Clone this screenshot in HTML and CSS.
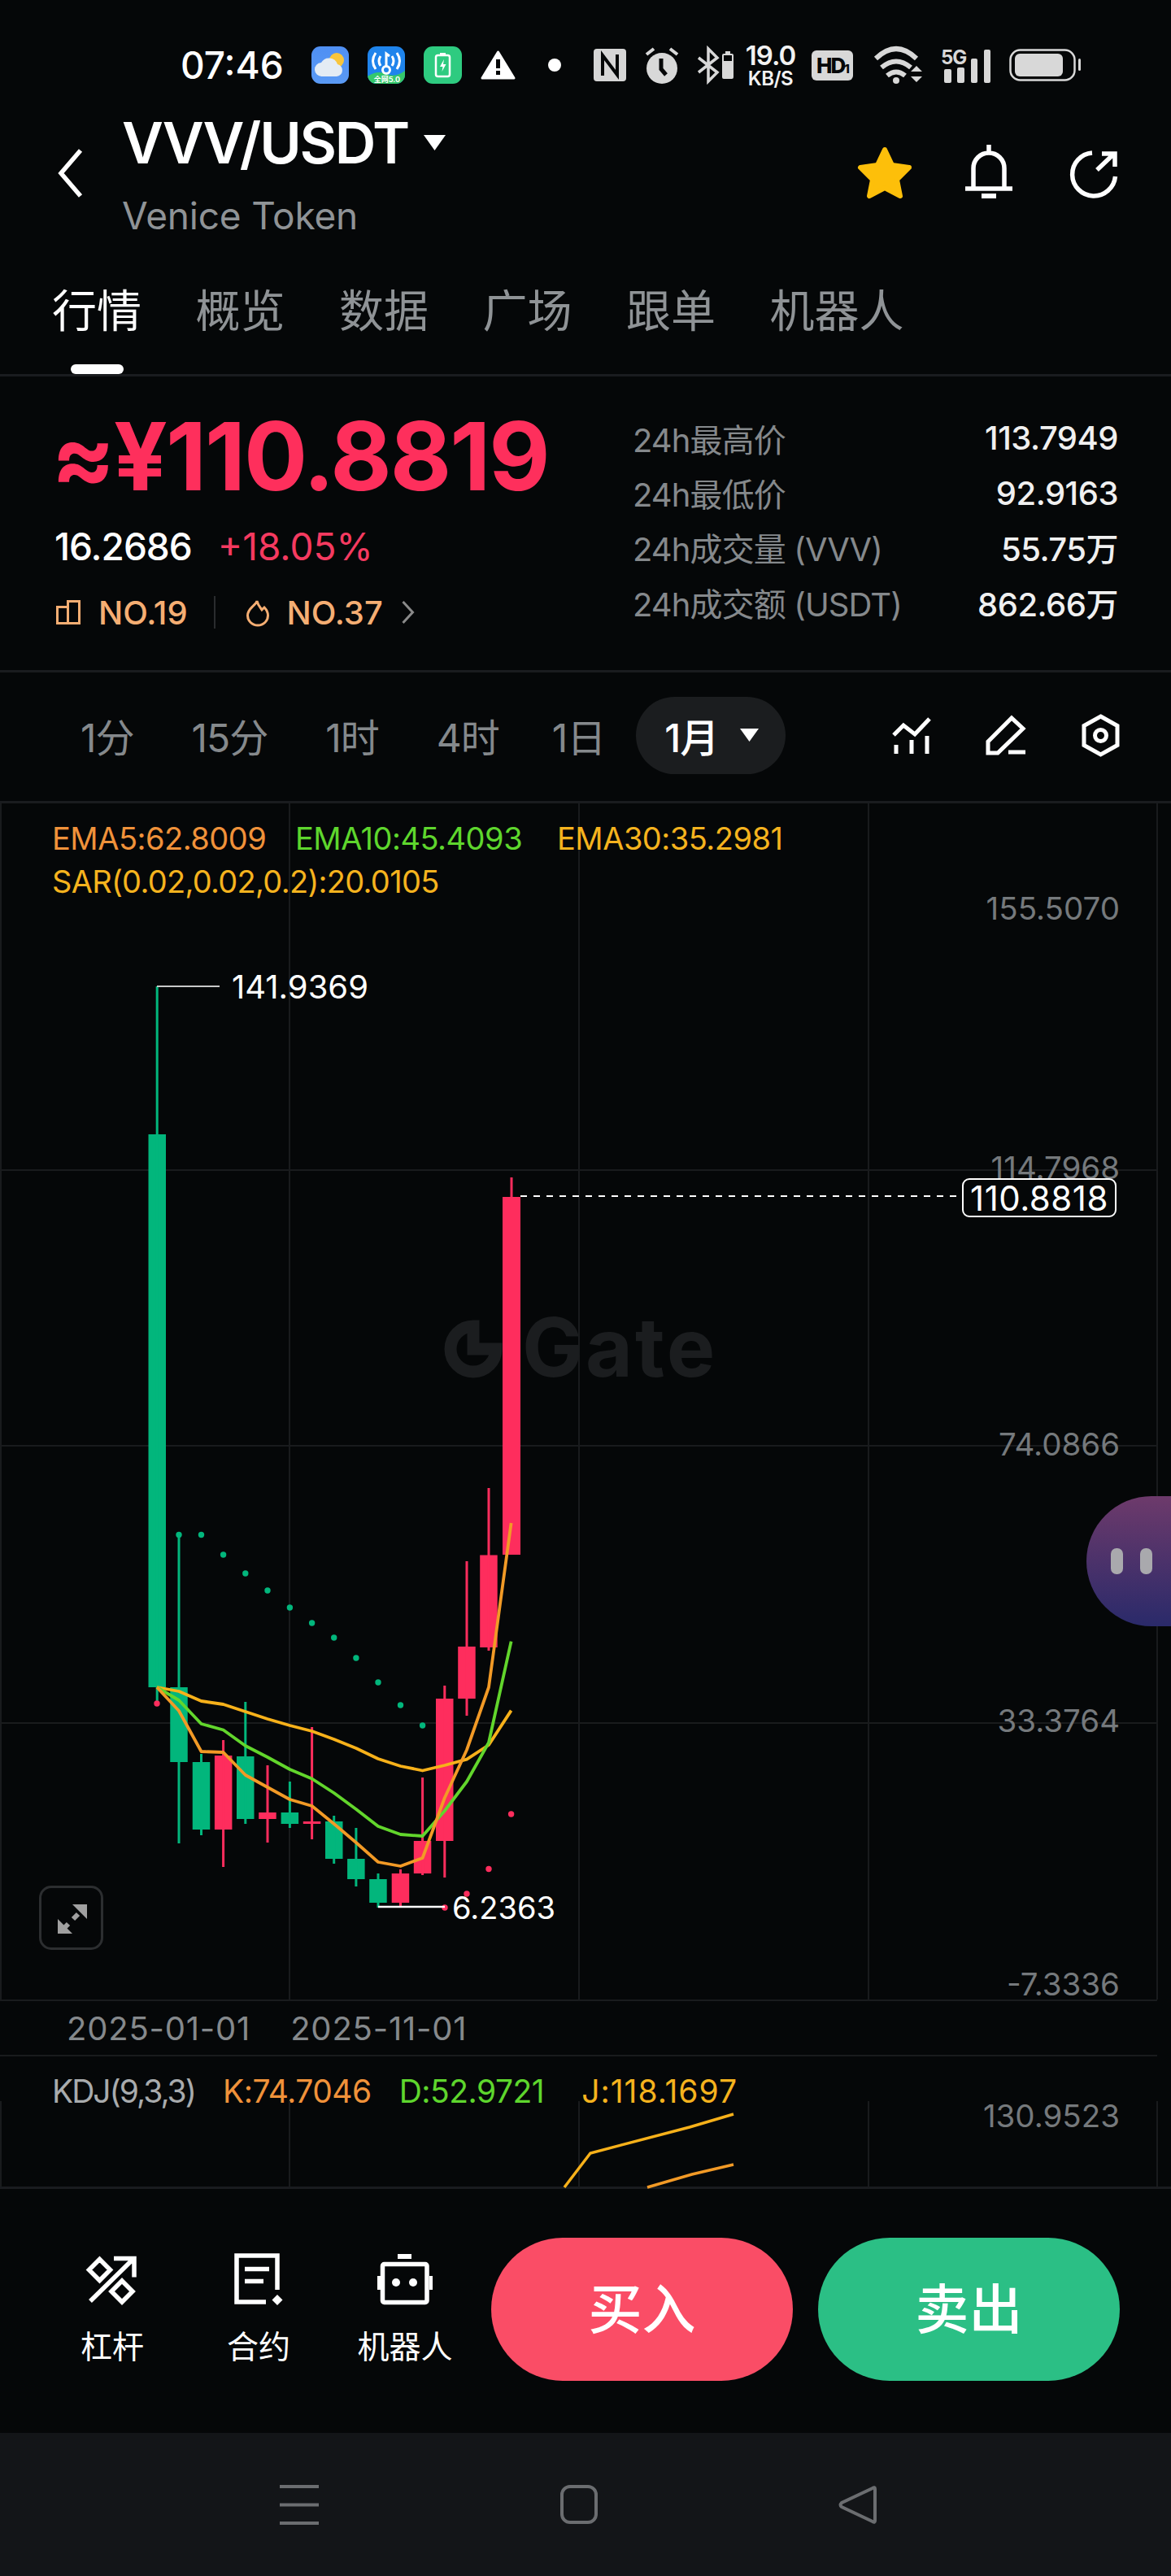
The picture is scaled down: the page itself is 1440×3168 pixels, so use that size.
FILE: index.html
```html
<!DOCTYPE html>
<html lang="zh-CN">
<head>
  <meta charset="UTF-8" />
  <meta name="viewport" content="width=device-width, initial-scale=1.0"/>
  <title>VVV/USDT</title>
  <link rel="stylesheet" href="styles.css">
</head>

<body>
  <!-- phone status bar -->
  <div class="status">
    <span class="clock">07:46</span>
    <svg class="app-first" width="46" height="46" viewBox="0 0 46 46">
      <defs><linearGradient id="sky" x1="0" y1="0" x2="0" y2="1"><stop offset="0" stop-color="#4f8ff3"/><stop offset="1" stop-color="#5a9af5"/></linearGradient></defs>
      <rect width="46" height="46" rx="11" fill="url(#sky)"/>
      <circle cx="31" cy="17" r="9" fill="#f8c53c"/>
      <path d="M13 37a8.500 8.500 0 0 1-1-17 11 11 0 0 1 20 2 7.600 7.600 0 0 1-1 15z" fill="#e4ecf4"/>
    </svg>
    <svg width="46" height="46" viewBox="0 0 46 46">
      <rect width="46" height="46" rx="11" fill="#1f84ec"/>
      <path d="M0 37q12-8 23-3t23-4v5a11 11 0 0 1-11 11H11A11 11 0 0 1 0 35z" fill="#35c86c"/>
      <path d="M10 8q-7 10 0 20M16 12q-4 6 0 12M36 8q7 10 0 20M30 12q4 6 0 12" class="wifi-arcs"/>
      <circle cx="23" cy="29" r="4.500" class="wifi-arcs"/>
      <path d="M23 24V9l4 3" class="wifi-arcs"/>
      <text x="24" y="44" class="wifi-tag">全网5.0</text>
    </svg>
    <svg width="47" height="46" viewBox="0 0 47 46">
      <rect width="47" height="46" rx="11" fill="#2ecb80"/>
      <rect x="15" y="11" width="17" height="26" rx="2.500" class="batt-line"/>
      <rect x="20" y="8" width="7" height="3" fill="#fff"/>
      <path d="M25 16l-5 9h3.500l-1 6 5-9h-3.500z" fill="#fff"/>
    </svg>
    <svg width="43" height="36" viewBox="0 0 43 36">
      <path d="M21.500 2L41 34H2z" fill="#fff" stroke="#fff" stroke-width="3" stroke-linejoin="round"/>
      <rect x="19" y="11" width="5" height="11" fill="#050708"/>
      <rect x="19" y="25" width="5" height="5" fill="#050708"/>
    </svg>
    <span class="dot"></span>
    <svg class="nfc" width="40" height="40" viewBox="0 0 40 40">
      <rect width="40" height="40" rx="4" fill="#d6d6d6"/>
      <path d="M11 33V8l18 24V7" class="nfc-line"/>
    </svg>
    <svg width="42" height="45" viewBox="0 0 42 45">
      <circle cx="21" cy="26" r="19" fill="#d8d8d8"/>
      <path d="M20 14v13l6 7" class="alarm-hand"/>
      <path d="M2 9l9-7M40 9l-9-7" class="alarm-ear"/>
    </svg>
    <svg class="bt" width="26" height="44" viewBox="0 0 26 44">
      <path d="M1 13l23 18-11 11V2l11 11L1 31" class="bt-line"/>
    </svg>
    <svg class="bt-batt" width="14" height="34" viewBox="0 0 14 34">
      <path d="M4 0h6v3h2a2 2 0 0 1 2 2v27a2 2 0 0 1-2 2H2a2 2 0 0 1-2-2V5a2 2 0 0 1 2-2h2z" fill="#d8d8d8"/>
      <rect x="2" y="5" width="10" height="7" fill="#050708"/>
    </svg>
    <div class="speed">
      <span class="speed-num">19.0</span>
      <span class="speed-unit">KB/S</span>
    </div>
    <span class="hd">HD<small>1</small></span>
    <svg class="wifi" width="59" height="45" viewBox="0 0 59 45">
      <path d="M2 14q25-24 50 0M9 25q18-15 36 0M16 35q11-9 22 0" class="wifi-line"/>
      <circle cx="27" cy="41" r="4" fill="#d8d8d8"/>
      <path d="M45 30h14l-7-7zM45 36h14l-7 7z" fill="#d8d8d8"/>
    </svg>
    <svg width="61" height="44" viewBox="0 0 61 44">
      <text x="0" y="21" class="five-g">5G</text>
      <rect x="4" y="27" width="9" height="17" rx="2" fill="#d8d8d8"/>
      <rect x="20" y="25" width="9" height="19" rx="2" fill="#d8d8d8"/>
      <rect x="37" y="14" width="8" height="30" rx="2" fill="#d8d8d8"/>
      <rect x="53" y="3" width="8" height="41" rx="2" fill="#d8d8d8"/>
    </svg>
    <svg width="88" height="40" viewBox="0 0 88 40">
      <rect x="1.500" y="1.500" width="79" height="37" rx="12" class="batt-frame"/>
      <rect x="7" y="6" width="59" height="28" rx="6" fill="#d8d8d8"/>
      <rect x="85" y="12" width="3" height="15" rx="1.500" fill="#d8d8d8"/>
    </svg>
  </div>

  <!-- pair name and actions -->
  <div class="head">
    <svg class="back" width="33" height="60" viewBox="0 0 33 60"><path d="M29 2L5 30l24 28" class="icon-line"/></svg>
    <div class="pair">
      <div class="pair-name">VVV/USDT<svg class="pair-caret" width="27" height="19" viewBox="0 0 27 19"><path d="M0 0h27L13.500 19z" fill="#fff"/></svg></div>
      <div class="pair-sub">Venice Token</div>
    </div>
    <div class="actions">
      <svg width="68" height="64" viewBox="0 0 68 64"><path d="M34 4l9 19 21 3-15 15 4 20-19-10-19 10 4-20L4 26l21-3z" class="star"/></svg>
      <svg class="bell" width="58" height="67" viewBox="0 0 58 67">
        <path d="M10 54V29a19 19 0 0 1 38 0v25M0 54h58M29 0v10" class="icon-line"/>
        <rect x="20" y="60" width="18" height="6" fill="#fff"/>
      </svg>
      <svg class="share" width="59" height="58" viewBox="0 0 59 58">
        <path d="M28 3a26.500 26.500 0 1 0 28.500 29" class="icon-line"/>
        <path d="M34 24L54 5M40 4h16v16" class="icon-line"/>
      </svg>
    </div>
  </div>

  <div class="tabs">
    <span class="tab active">行情</span>
    <span class="tab">概览</span>
    <span class="tab">数据</span>
    <span class="tab">广场</span>
    <span class="tab">跟单</span>
    <span class="tab">机器人</span>
  </div>

  <!-- price block -->
  <div class="ticker">
    <div class="ticker-left">
      <div class="price">≈¥110.8819</div>
      <div class="change">
        <span class="change-usd">16.2686</span>
        <span class="change-pct">+18.05%</span>
      </div>
      <div class="ranks">
        <svg width="30" height="30" viewBox="0 0 30 30"><path d="M1.500 28.500v-20h13v20zM14.500 28.500v-27h14v27z" class="rank-line"/></svg>
        <span class="rank-text">NO.19</span>
        <span class="rank-sep"></span>
        <svg width="28" height="33" viewBox="0 0 28 33"><path d="M13 2c1 5 4 8 6 11l3-3c3 3 4.500 6 4.500 10a12.500 12 0 0 1-25 0c0-6 4-9 7-12 2-2 4-3 4.500-6z" class="rank-line"/></svg>
        <span class="rank-text">NO.37</span>
        <svg class="rank-more" width="15" height="28" viewBox="0 0 15 28"><path d="M1.500 1l12 13-12 13" class="more-line"/></svg>
      </div>
    </div>
    <div class="stats">
      <div class="stat"><span>24h最高价</span><b>113.7949</b></div>
      <div class="stat"><span>24h最低价</span><b>92.9163</b></div>
      <div class="stat"><span>24h成交量 (VVV)</span><b>55.75万</b></div>
      <div class="stat"><span>24h成交额 (USDT)</span><b>862.66万</b></div>
    </div>
  </div>

  <!-- time frames -->
  <div class="frames">
    <span class="frame">1分</span>
    <span class="frame">15分</span>
    <span class="frame">1时</span>
    <span class="frame frame-four">4时</span>
    <span class="frame">1日</span>
    <span class="frame-on">1月<svg width="23" height="16" viewBox="0 0 23 16"><path d="M0 0h23L11.500 16z" fill="#fff"/></svg></span>
    <div class="frame-tools">
      <svg width="46" height="45" viewBox="0 0 46 45">
        <path d="M1 22L13 10l14 11L45 2M4 34v11M23 28v17M42 23v22" class="tool-line"/>
      </svg>
      <svg width="48" height="48" viewBox="0 0 48 48">
        <path d="M2 32L31 3l14 13-31 30H2zM27 45h21" class="tool-line"/>
      </svg>
      <svg width="47" height="53" viewBox="0 0 47 53">
        <path d="M23.500 3L44 14.500v24L23.500 50 3 38.500v-24z" class="tool-line"/>
        <circle cx="23.500" cy="26.500" r="7" class="tool-line"/>
      </svg>
    </div>
  </div>

  <!-- main candle chart, svg coordinates are page coordinates -->
  <div class="chart">
    <svg class="chart-svg" width="1440" height="1471" viewBox="0 988 1440 1471">
      <g class="grid">
        <path d="M1 988V2459M356 988V2459M712 988V2459M1068 988V2459M1423 988V2459"/>
        <path d="M0 1439H1423M0 1778H1423M0 2119H1423"/>
      </g>

      <g class="mark">
        <path d="M582 1631a28 28 0 1 0 28 28h-28z" class="mark-ring"/>
        <text x="642" y="1693" class="mark-text">Gate</text>
      </g>

      <text x="64" y="1031" class="legend ema5">EMA5:62.8009</text>
      <text x="363" y="1031" class="legend ema10">EMA10:45.4093</text>
      <text x="685" y="1031" class="legend ema30">EMA30:35.2981</text>
      <text x="64" y="1084" class="legend sar">SAR(0.02,0.02,0.2):20.0105</text>

      <g class="axis">
        <text x="1377" y="1117">155.5070</text>
        <text x="1377" y="1436">114.7968</text>
        <text x="1377" y="1776">74.0866</text>
        <text x="1377" y="2116">33.3764</text>
        <text x="1377" y="2440">-7.3336</text>
      </g>

      <g class="up">
        <rect x="182.500" y="1395" width="21.500" height="680"/><rect x="191.700" y="1213" width="3" height="880"/>
        <rect x="209.250" y="2075" width="21.500" height="92"/><rect x="218.500" y="1887" width="3" height="380"/>
        <rect x="236.750" y="2167" width="21.500" height="83"/><rect x="246" y="2157" width="3" height="100"/>
        <rect x="291" y="2160" width="21.500" height="77"/><rect x="300.300" y="2093" width="3" height="150"/>
        <rect x="345.600" y="2229" width="21.500" height="14"/><rect x="354.900" y="2191" width="3" height="57"/>
        <rect x="400" y="2240" width="21.500" height="46"/><rect x="409.200" y="2233" width="3" height="59"/>
        <rect x="427.100" y="2286" width="21.500" height="25"/><rect x="436.400" y="2248" width="3" height="72"/>
        <rect x="454.200" y="2311" width="21.500" height="29"/><rect x="463.500" y="2304" width="3" height="42"/>
      </g>
      <g class="down">
        <rect x="263.900" y="2159" width="21.500" height="91"/><rect x="273.100" y="2140" width="3" height="156"/>
        <rect x="318.200" y="2229" width="21.500" height="8"/><rect x="327.500" y="2171" width="3" height="95"/>
        <rect x="372.800" y="2240" width="21.500" height="3"/><rect x="382.100" y="2124" width="3" height="138"/>
        <rect x="481.700" y="2304" width="21.500" height="36"/><rect x="491" y="2299" width="3" height="46"/>
        <rect x="508.800" y="2264" width="21.500" height="40"/><rect x="518.100" y="2186" width="3" height="120"/>
        <rect x="536" y="2089" width="21.500" height="175"/><rect x="545.300" y="2073" width="3" height="236"/>
        <rect x="563.200" y="2025" width="21.500" height="64"/><rect x="572.500" y="1920" width="3" height="190"/>
        <rect x="590.200" y="1912.500" width="21.500" height="113.500"/><rect x="599.500" y="1830" width="3" height="200"/>
        <rect x="618" y="1472" width="22" height="440"/><rect x="627.500" y="1448" width="3" height="24"/>
      </g>

      <g class="sar-up">
        <circle cx="220" cy="1887.500" r="3.700"/><circle cx="247.500" cy="1887.500" r="3.700"/>
        <circle cx="274.600" cy="1912" r="3.700"/><circle cx="301.800" cy="1935" r="3.700"/>
        <circle cx="329" cy="1956" r="3.700"/><circle cx="356.400" cy="1977" r="3.700"/>
        <circle cx="383.600" cy="1996" r="3.700"/><circle cx="410.700" cy="2014" r="3.700"/>
        <circle cx="437.900" cy="2039" r="3.700"/><circle cx="465" cy="2069" r="3.700"/>
        <circle cx="492.500" cy="2097" r="3.700"/><circle cx="519.600" cy="2122" r="3.700"/>
      </g>
      <g class="sar-down">
        <circle cx="193" cy="2095" r="3.700"/><circle cx="547" cy="2346" r="3.700"/>
        <circle cx="574" cy="2329" r="3.700"/><circle cx="601" cy="2298.500" r="3.700"/>
        <circle cx="628.600" cy="2231" r="3.700"/>
      </g>

      <polyline class="line line-30" points="193,2075 220,2080 247.500,2092 274.600,2096 301.800,2105 329,2114 356.400,2122 383.600,2129 410.700,2139 437.900,2150 465,2163 492.500,2172 519.600,2177.500 546.800,2171 574,2163.600 601,2146 628.600,2103.600"/>
      <polyline class="line line-10" points="193,2075 220,2091 247.500,2120 274.600,2127.500 301.800,2147 329,2161 356.400,2176 383.600,2187.500 410.700,2205 437.900,2225 465,2246 492.500,2256 519.600,2258 546.800,2227 574,2191 601,2143 628.600,2018.600"/>
      <polyline class="line line-5" points="193,2075 220,2104 247.500,2154 274.600,2155 301.800,2183 329,2198 356.400,2213 383.600,2221 410.700,2243 437.900,2266 465,2290 492.500,2295 519.600,2285 546.800,2211 574,2152 601,2075 628.600,1873"/>

      <path d="M193 1213H270" class="pin-high"/>
      <text x="285" y="1213" class="pin-text">141.9369</text>
      <path d="M465 2345H547" class="pin-low"/>
      <text x="556" y="2346" class="pin-low-text">6.2363</text>

      <path d="M640 1471H1183" class="last-dash"/>
      <rect x="1184" y="1450" width="188" height="46" rx="8" class="last-box"/>
      <text x="1278" y="1473" class="last-text">110.8818</text>
    </svg>

    <div class="expand">
      <svg width="73" height="73" viewBox="0 0 73 73">
        <path d="M38 20h18v18zM20 38v18h18z" fill="#a0a0a0"/>
        <path d="M45 32l-6 6M33 44l-6 6" class="expand-line"/>
      </svg>
    </div>
    <div class="float-btn"><i></i><i></i></div>
  </div>

  <div class="dates">
    <span>2025-01-01</span>
    <span>2025-11-01</span>
  </div>

  <!-- KDJ panel, cut off by the bottom bar -->
  <div class="kdj">
    <div class="kdj-legend">
      <span class="kdj-name">KDJ(9,3,3)</span>
      <span class="ema5">K:74.7046</span>
      <span class="ema10">D:52.9721</span>
      <span class="ema30">J:118.1697</span>
    </div>
    <svg class="kdj-svg" width="1440" height="105" viewBox="0 2584 1440 105">
      <g class="grid"><path d="M1 2584V2689M356 2584V2689M712 2584V2689M1068 2584V2689M1423 2584V2689"/></g>
      <polyline class="kdj-line line-30" points="694,2690 726,2648 848,2616 902,2600"/>
      <polyline class="kdj-line line-5" points="796,2690 851,2674 902,2662"/>
      <text x="1377" y="2602" class="kdj-axis">130.9523</text>
    </svg>
  </div>

  <!-- bottom trade bar -->
  <div class="trade">
    <div class="trade-tools">
      <div class="trade-tool">
        <div class="trade-icon">
          <svg width="60" height="60" viewBox="0 0 60 60">
            <path d="M14.500 5.500l13 13-13 13-13-13zM42 32l13 13-13 13-13-13zM3 57L56 5M32 4.500h25v23" class="trade-line"/>
          </svg>
        </div>
        <span>杠杆</span>
      </div>
      <div class="trade-tool">
        <div class="trade-icon">
          <svg width="60" height="65" viewBox="0 0 60 65">
            <path d="M39 60H3V3h50v42M13 19.500h30M13 34.500h23" class="trade-line"/>
            <path d="M53 51l6.500 6.500L53 64l-6.500-6.500z" fill="#fff"/>
          </svg>
        </div>
        <span>合约</span>
      </div>
      <div class="trade-tool">
        <div class="trade-icon">
          <svg width="68" height="62" viewBox="0 0 68 62">
            <rect x="25" y="0" width="17" height="6" fill="#fff"/>
            <rect x="6.500" y="12.500" width="54.500" height="47" rx="2" class="trade-line"/>
            <rect x="0" y="27" width="4" height="17" fill="#fff"/>
            <rect x="64" y="27" width="4" height="17" fill="#fff"/>
            <circle cx="23" cy="35" r="5" fill="#fff"/>
            <circle cx="44" cy="35" r="5" fill="#fff"/>
          </svg>
        </div>
        <span>机器人</span>
      </div>
    </div>
    <div class="trade-btn buy">买入</div>
    <div class="trade-btn sell">卖出</div>
  </div>

  <div class="nav">
    <svg width="48" height="49" viewBox="0 0 48 49"><path d="M0 2h48M0 24.500h48M0 47h48" class="nav-line"/></svg>
    <svg width="46" height="48" viewBox="0 0 46 48"><rect x="2" y="2" width="42" height="44" rx="10" class="nav-line"/></svg>
    <svg width="46" height="47" viewBox="0 0 46 47"><path d="M44 4v39q0 3-3 1L3 26q-3-2 0-5L41 3q3-2 3 1z" class="nav-line"/></svg>
  </div>
</body>
</html>
```

FILE: styles.css
```css
* {
  box-sizing: border-box;
}
body {
  margin: 0;
  width: 1440px;
  height: 3168px;
  overflow: hidden;
  background-color: #050708;
  color: #fff;
  font-family: Inter, "Noto Sans CJK SC", sans-serif;
}
svg {
  display: block;
  flex: none;
  overflow: visible;
}

/* status bar */
.status {
  display: flex;
  align-items: center;
  gap: 23px;
  height: 130px;
  padding: 30px 0 0 222px;
}
.clock {
  width: 128px;
  font-size: 46px;
  font-weight: 500;
  line-height: 1;
  white-space: nowrap;
}
.app-first {
  margin-left: 10px;
}
.dot {
  width: 16px;
  height: 16px;
  margin: 0 17px;
  border-radius: 50%;
  background-color: #fff;
}
.bt-batt {
  margin-left: -19px;
}
.speed {
  display: flex;
  flex-direction: column;
  align-items: center;
  width: 61px;
  margin: 0 -3px 0 -8px;
  line-height: 1;
  color: #f2f2f2;
}
.speed-num {
  font-size: 33px;
  font-weight: 600;
  letter-spacing: -1px;
}
.speed-unit {
  font-size: 24px;
  font-weight: 600;
  letter-spacing: -0.500px;
}
.hd {
  width: 51px;
  height: 37px;
  border-radius: 6px;
  background-color: #d8d8d8;
  color: #050708;
  font-size: 26px;
  font-weight: 800;
  line-height: 37px;
  text-align: center;
  letter-spacing: -2px;
}
.hd small {
  font-size: 15px;
}
.wifi {
  margin-left: 3px;
}
.wifi-arcs {
  fill: none;
  stroke: #fff;
  stroke-width: 3;
}
.wifi-tag {
  font-size: 9px;
  font-weight: 700;
  fill: #fff;
  text-anchor: middle;
}
.batt-line {
  fill: none;
  stroke: #fff;
  stroke-width: 2.500;
}
.nfc-line {
  fill: none;
  stroke: #050708;
  stroke-width: 4;
}
.alarm-hand {
  fill: none;
  stroke: #050708;
  stroke-width: 5;
}
.alarm-ear {
  fill: none;
  stroke: #d8d8d8;
  stroke-width: 4;
}
.bt-line {
  fill: none;
  stroke: #d8d8d8;
  stroke-width: 3.500;
}
.wifi-line {
  fill: none;
  stroke: #d8d8d8;
  stroke-width: 6;
}
.five-g {
  font-size: 24px;
  font-weight: 700;
  fill: #d8d8d8;
  letter-spacing: -1px;
}
.batt-frame {
  fill: none;
  stroke: #d8d8d8;
  stroke-width: 2.500;
}

/* pair header */
.head {
  display: flex;
  align-items: flex-start;
  height: 190px;
  padding: 0 66px 0 70px;
}
.back {
  margin: 53px 47px 0 0;
}
.icon-line {
  fill: none;
  stroke: #fff;
  stroke-width: 5.500;
}
.pair {
  margin-top: 8px;
}
.pair-name {
  display: flex;
  align-items: center;
  font-size: 70px;
  font-weight: 600;
  line-height: 76px;
  letter-spacing: -2.200px;
}
.pair-caret {
  margin: -2px 0 0 19px;
}
.pair-sub {
  margin-top: 24px;
  font-size: 46px;
  line-height: 54px;
  letter-spacing: -0.200px;
  color: #8f9396;
}
.actions {
  display: flex;
  align-items: center;
  height: 67px;
  margin: 48px 0 0 auto;
}
.star {
  fill: #fdbf0a;
  stroke: #fdbf0a;
  stroke-width: 6;
  stroke-linejoin: round;
}
.bell {
  margin: 0 70px 0 65px;
}
.share {
  margin-top: 5px;
}

/* tabs */
.tabs {
  display: flex;
  gap: 66.500px;
  height: 143px;
  padding-left: 64px;
  border-bottom: 3px solid #1a1c1f;
}
.tab {
  position: relative;
  height: 140px;
  padding-top: 29px;
  font-size: 55px;
  line-height: 66px;
  color: #8f9396;
}
.tab.active {
  color: #fff;
}
.tab.active::after {
  content: "";
  position: absolute;
  left: 23px;
  bottom: 0;
  width: 65px;
  height: 12px;
  border-radius: 6px;
  background-color: #fff;
}

/* ticker */
.ticker {
  display: flex;
  height: 364px;
  border-bottom: 3px solid #1a1c1f;
}
.ticker-left {
  width: 778px;
  padding: 38px 0 0 69px;
}
.price {
  margin-left: -6px;
  font-size: 116px;
  font-weight: 700;
  line-height: 120px;
  letter-spacing: -2px;
  color: #fe2f5c;
  white-space: nowrap;
}
.change {
  display: flex;
  gap: 32px;
  margin: 26px 0 0 -2px;
  font-size: 46px;
  font-weight: 500;
  line-height: 50px;
}
.change-usd {
  letter-spacing: -1px;
}
.change-pct {
  color: #f53a60;
  font-weight: 400;
}
.ranks {
  display: flex;
  align-items: center;
  height: 44px;
  margin-top: 34px;
  color: #f5ae73;
  font-size: 40px;
  font-weight: 500;
}
.rank-text {
  margin-left: 22px;
}
.rank-line {
  fill: none;
  stroke: #f5ae73;
  stroke-width: 3;
}
.rank-sep {
  width: 2px;
  height: 40px;
  margin: 0 38px 0 32px;
  background-color: #2a2c2e;
}
.rank-more {
  margin-left: 23px;
}
.more-line {
  fill: none;
  stroke: #8a8a8a;
  stroke-width: 3;
}
.stats {
  flex: 1;
  padding: 42px 65px 0 0;
}
.stat {
  display: flex;
  justify-content: space-between;
  align-items: center;
  height: 67.400px;
  font-size: 40px;
  color: #85898c;
}
.stat span {
  letter-spacing: -0.900px;
}
.stat b {
  color: #f0f0f0;
  font-weight: 500;
  letter-spacing: -0.500px;
}

/* time frames */
.frames {
  display: flex;
  align-items: center;
  gap: 71px;
  height: 161px;
  padding: 0 63px 4px 99px;
  border-bottom: 3px solid #1a1c1f;
}
.frame {
  font-size: 48px;
  letter-spacing: -1px;
  color: #85898c;
  white-space: nowrap;
}
.frame-four {
  margin-right: -6px;
}
.frame-on {
  display: flex;
  align-items: center;
  gap: 27px;
  height: 95px;
  margin-left: -33px;
  padding: 0 33px 0 35px;
  border-radius: 48px;
  background-color: #1b1d1f;
  font-size: 48px;
  font-weight: 500;
  letter-spacing: -1px;
}
.frame-tools {
  display: flex;
  align-items: center;
  gap: 69px;
  margin-left: auto;
}
.tool-line {
  fill: none;
  stroke: #fff;
  stroke-width: 5;
}

/* chart */
.chart {
  position: relative;
  height: 1471px;
}
.grid path {
  fill: none;
  stroke: #191b1d;
  stroke-width: 2;
}
.mark-ring {
  fill: none;
  stroke: #1b1d1f;
  stroke-width: 15;
}
.mark-text {
  font-size: 100px;
  font-weight: 700;
  letter-spacing: 3px;
  fill: #1b1d1f;
}
.legend {
  font-size: 38px;
  dominant-baseline: central;
  letter-spacing: -0.500px;
}
text.ema5 {
  fill: #f0923a;
}
text.ema10 {
  fill: #5ed62d;
}
text.ema30,
text.sar {
  fill: #f5b31e;
}
text.sar {
  letter-spacing: -0.700px;
}
.axis text {
  font-size: 38.500px;
  fill: #75797c;
  text-anchor: end;
  dominant-baseline: central;
}
.up rect {
  fill: #02b67c;
}
.down rect {
  fill: #fe2d5d;
}
.sar-up circle {
  fill: #02b67c;
}
.sar-down circle {
  fill: #fe2d5d;
}
.line {
  fill: none;
  stroke-width: 3.800;
  stroke-linejoin: round;
}
.line-5 {
  stroke: #f29a26;
}
.line-10 {
  stroke: #62d62c;
}
.line-30 {
  stroke: #f7b11a;
}
.pin-high {
  fill: none;
  stroke: #c8c8c8;
  stroke-width: 2;
}
.pin-low {
  fill: none;
  stroke: #fff;
  stroke-width: 2.500;
}
.pin-text {
  font-size: 40px;
  fill: #fff;
  dominant-baseline: central;
}
.pin-low-text {
  font-size: 38px;
  fill: #fff;
  dominant-baseline: central;
}
.last-dash {
  fill: none;
  stroke: #fff;
  stroke-width: 2;
  stroke-dasharray: 8 8;
}
.last-box {
  fill: #050708;
  stroke: #fff;
  stroke-width: 2;
}
.last-text {
  font-size: 42px;
  letter-spacing: 0.500px;
  fill: #fff;
  text-anchor: middle;
  dominant-baseline: central;
}
.expand {
  position: absolute;
  left: 48px;
  top: 1331px;
  width: 79px;
  height: 79px;
  border: 3px solid #2c2e30;
  border-radius: 15px;
}
.expand-line {
  fill: none;
  stroke: #a0a0a0;
  stroke-width: 6;
}
.float-btn {
  position: absolute;
  right: 0;
  top: 852px;
  display: flex;
  align-items: center;
  gap: 21px;
  width: 104px;
  height: 160px;
  padding-left: 30px;
  border-radius: 80px 0 0 80px;
  background: linear-gradient(#6d3a6b, #2a2a6a);
}
.float-btn i {
  width: 15px;
  height: 32px;
  border-radius: 7px;
  background-color: #a9a9ad;
}

/* dates under the chart */
.dates {
  display: flex;
  align-items: center;
  gap: 49px;
  height: 70px;
  margin-right: 17px;
  padding-left: 82px;
  border-top: 2px solid #191b1d;
  border-bottom: 2px solid #191b1d;
  font-size: 40px;
  letter-spacing: 0.800px;
  color: #85898c;
}

/* KDJ */
.kdj {
  height: 160px;
}
.kdj-legend {
  display: flex;
  align-items: center;
  gap: 34px;
  height: 55px;
  padding: 29px 0 0 64px;
  font-size: 39px;
  letter-spacing: -0.500px;
}
.kdj-legend .ema5 {
  color: #f0923a;
}
.kdj-legend .ema10 {
  color: #5ed62d;
}
.kdj-legend .ema30 {
  margin-left: 12px;
  letter-spacing: 1px;
  color: #f5b31e;
}
.kdj-name {
  letter-spacing: -2px;
  color: #a8abad;
}
.kdj-line {
  fill: none;
  stroke-width: 3.500;
}
.kdj-axis {
  font-size: 38.500px;
  fill: #75797c;
  text-anchor: end;
  dominant-baseline: central;
}

/* trade bar */
.trade {
  display: flex;
  align-items: flex-start;
  height: 303px;
  padding: 60px 0 0 48px;
  border-top: 3px solid #1a1c1f;
}
.trade-tools {
  display: flex;
  width: 556px;
}
.trade-tool {
  display: flex;
  flex-direction: column;
  align-items: center;
  width: 180px;
  padding-top: 18px;
  font-size: 39px;
  line-height: 48px;
}
.trade-icon {
  display: flex;
  align-items: center;
  height: 66px;
  margin-bottom: 26px;
}
.trade-line {
  fill: none;
  stroke: #fff;
  stroke-width: 5.500;
}
.trade-btn {
  width: 371px;
  height: 176px;
  border-radius: 88px;
  font-size: 66px;
  font-weight: 500;
  line-height: 176px;
  text-align: center;
}
.buy {
  background-color: #fa4d66;
}
.sell {
  margin-left: 31px;
  background-color: #2bbf85;
}

/* android nav */
.nav {
  display: flex;
  align-items: center;
  gap: 297px;
  height: 176px;
  padding: 0 0 0 344px;
  background-color: #131518;
}
.nav-line {
  fill: none;
  stroke: #6b6d70;
  stroke-width: 4;
}
```
